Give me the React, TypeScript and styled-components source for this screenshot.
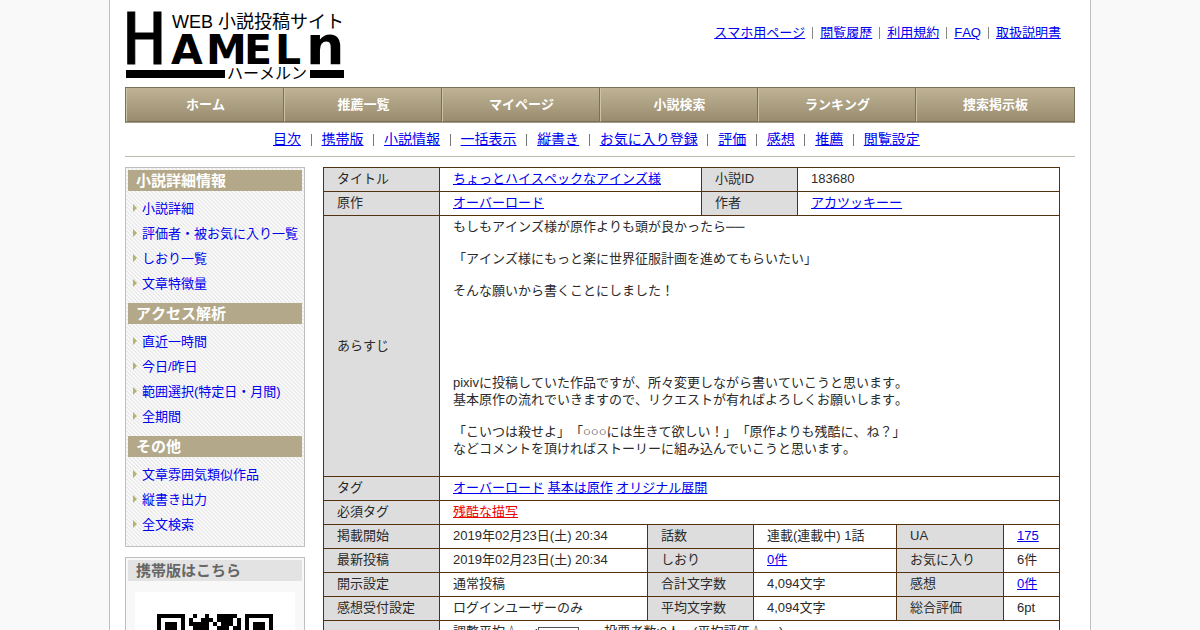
import React from "react";
import styled, { createGlobalStyle } from "styled-components";

const GlobalStyle = createGlobalStyle`
  * { box-sizing: border-box; }
  body {
    margin: 0;
    background: #f9f9f9;
    color: #2a2a2a;
    font-family: "Liberation Sans", "Noto Sans CJK JP", sans-serif;
    font-size: 13px;
    line-height: 17px;
    font-kerning: none;
    text-spacing-trim: space-all;
  }
  ul { margin: 0; padding: 0; list-style: none; }
  a { color: #0000ee; }
`;

const Page = styled.div`
  max-width: 982px;
  min-height: 100vh;
  margin: 0 auto;
  padding: 0 15px 20px;
  background: #fff;
  border: solid #c0c0c0;
  border-width: 0 1px;
`;

const Header = styled.header`
  display: flex;
  justify-content: space-between;
  align-items: flex-start;
  height: 87px;
  padding: 11px 14px 0 1px;
`;

const LogoArt = styled.svg`
  display: block;
  width: 218px;
  height: 70px;
  overflow: visible;
`;

const UtilityLinks = styled.ul`
  display: flex;
  align-items: center;
  padding-top: 13px;
`;

const UtilityItem = styled.li`
  display: flex;
  align-items: center;
  & + &::before {
    content: "";
    height: 12px;
    margin: 0 7px;
    border-left: 1px solid #888;
  }
`;

const GlobalNav = styled.nav`
  display: grid;
  grid-template-columns: repeat(6, 1fr);
  height: 36px;
  border: 1px solid #7a705a;
  border-bottom-color: #a79c80;
`;

const NavLink = styled.a`
  display: flex;
  align-items: center;
  justify-content: center;
  color: #fff;
  font-weight: bold;
  text-decoration: none;
  background: linear-gradient(#bfb394, #998c70);
  border-left: 1px solid #cdc3a6;
  border-bottom: 1px solid #7a705a;
  &:not(:last-child) { box-shadow: inset -1px 0 #7a705a; }
`;

const SubNav = styled.nav`
  padding: 8px 7px 8px 0;
  border-bottom: 1px solid #b9bdb0;
  font-size: 14px;
  line-height: 17px;
`;

const SubNavRow = styled.div`
  display: flex;
  align-items: center;
  justify-content: space-between;
  max-width: 647px;
  margin: 0 auto;
`;

const Separator = styled.span`
  height: 12px;
  border-left: 1px solid #777;
`;

const Columns = styled.div`
  display: grid;
  grid-template-columns: 180px minmax(0, 1fr);
  gap: 18px;
  padding: 10px 16px 0 0;
`;

const Sidebar = styled.aside`
  display: flex;
  flex-direction: column;
  gap: 10px;
`;

const Panel = styled.section<{ $hatched?: boolean }>`
  padding: 2px;
  border: 1px solid #bfbfbf;
  background: #f8f8f8;
  ${(p) =>
    p.$hatched &&
    `background: linear-gradient(45deg, #ebebeb 25%, #fafafa 25% 50%, #ebebeb 50% 75%, #fafafa 75%) 0 0 / 4px 4px;`}
`;

const PanelHeading = styled.h2<{ $muted?: boolean }>`
  margin: 0;
  padding-left: 8px;
  font-size: 15px;
  line-height: 21px;
  color: ${(p) => (p.$muted ? "#666" : "#fff")};
  background: ${(p) => (p.$muted ? "#e3e3e3" : "#b3a98a")};
`;

const MenuList = styled.ul`
  padding: 5px 0 7px 5px;
`;

const MenuItem = styled.li`
  display: flex;
  align-items: center;
  gap: 5px;
  height: 25px;
  white-space: nowrap;
  a { text-decoration: none; }
`;

const Arrow = styled.span`
  margin-bottom: 2px;
  border: solid transparent;
  border-width: 4px 0 4px 4px;
  border-left-color: #b5b46c;
`;

const QrFrame = styled.div`
  margin: 11px 7px 8px;
  padding: 22px;
  background: #fff;
  svg { display: block; width: 100%; }
`;

const NovelTable = styled.table`
  width: 100%;
  table-layout: fixed;
  border-collapse: collapse;
`;

const Label = styled.th`
  padding: 2px 0 4px 13px;
  border: 1px solid #533210;
  background: #ddd;
  font-weight: normal;
  text-align: left;
  white-space: nowrap;
`;

const Value = styled.td`
  padding: 2px 0 4px 13px;
  border: 1px solid #533210;
`;

const RatingValue = styled(Value)`
  height: 84px;
  vertical-align: top;
`;

const Line = styled.p`
  margin: 0;
  min-height: 15px;
`;

const WarningLink = styled.a`
  color: #ee0000;
`;

const RatingLine = styled.div`
  display: flex;
  align-items: center;
`;

const RatingBar = styled.span`
  width: 41px;
  height: 9px;
  margin-right: 25px;
  border: 1px solid #555;
`;

function Logo() {
  return (
    <LogoArt viewBox="0 0 218 70" role="img" aria-label="ハーメルン">
      <text x="-3" y="53" fontFamily="'DejaVu Sans Mono', monospace" fontSize="71" stroke="#000" strokeWidth="1">H</text>
      <g fontFamily="'DejaVu Sans', sans-serif" fontWeight="bold" fontSize="41">
        <text x="45" y="53">A</text>
        <text x="80" y="53">M</text>
        <text x="118" y="53">E</text>
        <text x="149" y="53">L</text>
        <text x="180" y="53" fontSize="54">n</text>
      </g>
      <g fontFamily="'Liberation Sans', 'Noto Sans CJK JP', sans-serif">
        <text x="46" y="17" fontSize="18">WEB</text>
        <text x="92" y="17" fontSize="18">小説投稿サイト</text>
        <text x="101" y="68" fontSize="16">ハーメルン</text>
      </g>
      <rect x="0" y="59" width="99" height="8" />
      <rect x="184" y="59" width="34" height="8" />
    </LogoArt>
  );
}

const QR_ROWS = [
  "#######..#..#..#####..#######",
  "#.....#.#..###.####.#.#.....#",
  "#.###.#.#####.#.###.#.#.###.#",
  "#.###.#..####..###.##.#.###.#",
  "#.###.#.##..#.##..#.#.#.###.#",
  "#.....#..#.##..#.##...#.....#",
  "#######.#.#.#.#.#.#.#.#######",
  "........##..#.##..#..........",
  "#.##.##..#.##.#.###..#.##.#.#",
  ".##.#..#.##..#..#.##.#..##.#.",
  "##..####..#.###..#..##.#..###",
  "..##.#..##.#..#.##.#..##.#..#",
  "#.#..##.#..##.##..##.#..###..",
  ".#.##..#.##..#..##..##.#..#.#",
  "##..#.##..#.##.#..#.##..##.#.",
  "..##.#..#.##..##.#..#.##..#.#",
  "#.##..#.##..#..#.##..#..##..#",
  ".#..##.#..##.##..#.##..#.##..",
  "#..##.##.#..##.#..##.#.#..###",
  ".##..#..##.#..##.#..##..#.#..",
  "#.#.#.#..#.##..##.#.######.#.",
  "........#.#..##..#.##...#.##.",
  "#######..##.#..##.###.#.##..#",
  "#.....#.#..##.#..#.##...#.#.#",
  "#.###.#..#..##.##..######..#.",
  "#.###.#.##.#..#..##..#..##.##",
  "#.###.#..#.##.##.#.##..#.##..",
  "#.....#.#.#..#..##..#.##..#.#",
  "#######.##..#.##..#.#.#.##..#",
];

function QrCode() {
  return (
    <svg viewBox="0 0 29 29" shapeRendering="crispEdges" role="img" aria-label="QRコード">
      {QR_ROWS.flatMap((row, y) =>
        [...row].map((c, x) => (c === "#" ? <rect key={`${x}-${y}`} x={x} y={y} width="1" height="1" /> : null)),
      )}
    </svg>
  );
}

const UTILITY = ["スマホ用ページ", "閲覧履歴", "利用規約", "FAQ", "取扱説明書"];
const NAV = ["ホーム", "推薦一覧", "マイページ", "小説検索", "ランキング", "捜索掲示板"];
const SUB_NAV = ["目次", "携帯版", "小説情報", "一括表示", "縦書き", "お気に入り登録", "評価", "感想", "推薦", "閲覧設定"];
const MENUS = [
  { title: "小説詳細情報", items: ["小説詳細", "評価者・被お気に入り一覧", "しおり一覧", "文章特徴量"] },
  { title: "アクセス解析", items: ["直近一時間", "今日/昨日", "範囲選択(特定日・月間)", "全期間"] },
  { title: "その他", items: ["文章雰囲気類似作品", "縦書き出力", "全文検索"] },
];
const SYNOPSIS = [
  "もしもアインズ様が原作よりも頭が良かったら──",
  "",
  "「アインズ様にもっと楽に世界征服計画を進めてもらいたい」",
  "",
  "そんな願いから書くことにしました！",
  "",
  "",
  "",
  "",
  "",
  "pixivに投稿していた作品ですが、所々変更しながら書いていこうと思います。",
  "基本原作の流れでいきますので、リクエストが有ればよろしくお願いします。",
  "",
  "「こいつは殺せよ」「○○○には生きて欲しい！」「原作よりも残酷に、ね？」",
  "などコメントを頂ければストーリーに組み込んでいこうと思います。",
  "",
];
const COLUMN_WIDTHS = [116, 208, 54, 52, 44, 99, 107, 56];
const link = (text: string) => <a href="#">{text}</a>;
const STATS: [string, React.ReactNode][][] = [
  [["掲載開始", "2019年02月23日(土) 20:34"], ["話数", "連載(連載中) 1話"], ["UA", link("175")]],
  [["最新投稿", "2019年02月23日(土) 20:34"], ["しおり", link("0件")], ["お気に入り", "6件"]],
  [["開示設定", "通常投稿"], ["合計文字数", "4,094文字"], ["感想", link("0件")]],
  [["感想受付設定", "ログインユーザーのみ"], ["平均文字数", "4,094文字"], ["総合評価", "6pt"]],
];

export default function App() {
  return (
    <>
      <GlobalStyle />
      <Page>
        <Header>
          <Logo />
          <UtilityLinks>
            {UTILITY.map((t) => (
              <UtilityItem key={t}>{link(t)}</UtilityItem>
            ))}
          </UtilityLinks>
        </Header>
        <GlobalNav>
          {NAV.map((t) => (
            <NavLink key={t} href="#">{t}</NavLink>
          ))}
        </GlobalNav>
        <SubNav>
          <SubNavRow>
            {SUB_NAV.map((t, i) => (
              <React.Fragment key={t}>
                {i > 0 && <Separator />}
                {link(t)}
              </React.Fragment>
            ))}
          </SubNavRow>
        </SubNav>
        <Columns>
          <Sidebar>
            <Panel $hatched>
              {MENUS.map((menu) => (
                <React.Fragment key={menu.title}>
                  <PanelHeading>{menu.title}</PanelHeading>
                  <MenuList>
                    {menu.items.map((t) => (
                      <MenuItem key={t}>
                        <Arrow />
                        {link(t)}
                      </MenuItem>
                    ))}
                  </MenuList>
                </React.Fragment>
              ))}
            </Panel>
            <Panel>
              <PanelHeading $muted>携帯版はこちら</PanelHeading>
              <QrFrame>
                <QrCode />
              </QrFrame>
            </Panel>
          </Sidebar>
          <main>
            <NovelTable>
              <colgroup>
                {COLUMN_WIDTHS.map((w, i) => (
                  <col key={i} width={w} />
                ))}
              </colgroup>
              <tbody>
                <tr>
                  <Label scope="row">タイトル</Label>
                  <Value colSpan={2}>{link("ちょっとハイスペックなアインズ様")}</Value>
                  <Label scope="row" colSpan={2}>小説ID</Label>
                  <Value colSpan={3}>183680</Value>
                </tr>
                <tr>
                  <Label scope="row">原作</Label>
                  <Value colSpan={2}>{link("オーバーロード")}</Value>
                  <Label scope="row" colSpan={2}>作者</Label>
                  <Value colSpan={3}>{link("アカツッキーー")}</Value>
                </tr>
                <tr>
                  <Label scope="row">あらすじ</Label>
                  <Value colSpan={7}>
                    {SYNOPSIS.map((t, i) => (
                      <Line key={i}>{t}</Line>
                    ))}
                  </Value>
                </tr>
                <tr>
                  <Label scope="row">タグ</Label>
                  <Value colSpan={7}>
                    {link("オーバーロード")} {link("基本は原作")} {link("オリジナル展開")}
                  </Value>
                </tr>
                <tr>
                  <Label scope="row">必須タグ</Label>
                  <Value colSpan={7}>
                    <WarningLink href="#">残酷な描写</WarningLink>
                  </Value>
                </tr>
                {STATS.map(([a, b, c]) => (
                  <tr key={a[0]}>
                    <Label scope="row">{a[0]}</Label>
                    <Value>{a[1]}</Value>
                    <Label scope="row" colSpan={2}>{b[0]}</Label>
                    <Value colSpan={2}>{b[1]}</Value>
                    <Label scope="row">{c[0]}</Label>
                    <Value>{c[1]}</Value>
                  </tr>
                ))}
                <tr>
                  <Label scope="row" aria-label="評価" />
                  <RatingValue colSpan={7}>
                    <RatingLine>
                      調整平均☆-.--:
                      <RatingBar />
                      投票者数:0人　(平均評価☆-.--)
                    </RatingLine>
                  </RatingValue>
                </tr>
              </tbody>
            </NovelTable>
          </main>
        </Columns>
      </Page>
    </>
  );
}
